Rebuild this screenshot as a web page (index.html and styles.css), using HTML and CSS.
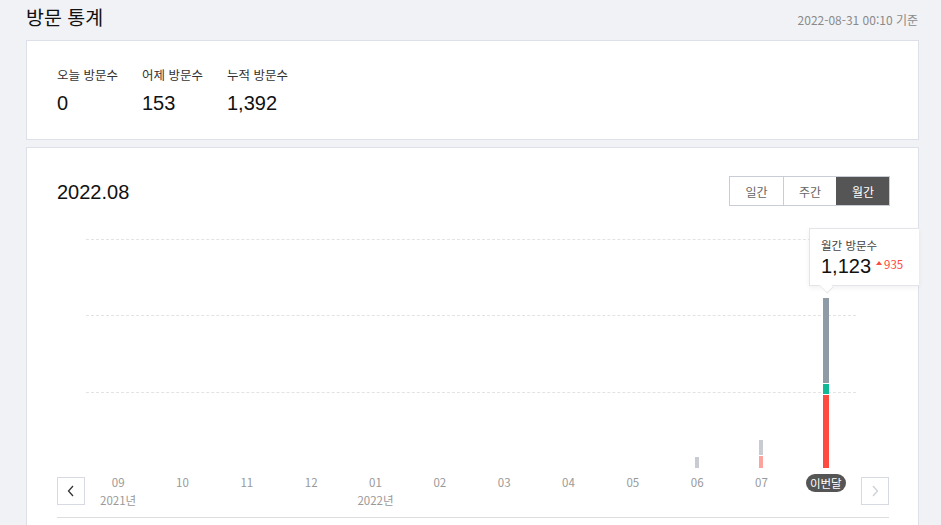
FILE: index.html
```html
<!DOCTYPE html>
<html lang="ko">
<head>
<meta charset="utf-8">
<link rel="stylesheet" href="styles.css">
</head>
<body>
<div class="page">
  <header class="page-head">
    <h1 class="page-title">방문 통계</h1>
    <span class="page-date">2022-08-31 00:10 기준</span>
  </header>

  <section class="card summary">
    <div class="stat">
      <div class="stat-label">오늘 방문수</div>
      <div class="stat-value">0</div>
    </div>
    <div class="stat">
      <div class="stat-label">어제 방문수</div>
      <div class="stat-value">153</div>
    </div>
    <div class="stat">
      <div class="stat-label">누적 방문수</div>
      <div class="stat-value">1,392</div>
    </div>
  </section>

  <section class="card chart-card">
    <div class="chart-head">
      <h2 class="chart-title">2022.08</h2>
      <div class="tabs">
        <button class="tab">일간</button>
        <button class="tab">주간</button>
        <button class="tab active">월간</button>
      </div>
    </div>

    <div class="plot-wrap">
      <div class="plot">
        <div class="band"></div>
        <div class="band"></div>
        <div class="band"></div>
        <div class="bars">
          <div class="col"></div>
          <div class="col"></div>
          <div class="col"></div>
          <div class="col"></div>
          <div class="col"></div>
          <div class="col"></div>
          <div class="col"></div>
          <div class="col"></div>
          <div class="col"></div>
          <div class="col">
            <div class="bar thin">
              <span class="seg pale-gray" style="height:11px"></span>
            </div>
          </div>
          <div class="col">
            <div class="bar thin">
              <span class="seg pale-gray" style="height:15px"></span>
              <span class="seg pale-red" style="height:12px"></span>
            </div>
          </div>
          <div class="col">
            <div class="bar wide">
              <span class="seg gray" style="height:85px"></span>
              <span class="seg green" style="height:10px"></span>
              <span class="seg red" style="height:73px"></span>
            </div>
          </div>
        </div>
      </div>
      <div class="tooltip">
        <div class="tip-label">월간 방문수</div>
        <div class="tip-row">
          <span class="tip-value">1,123</span>
          <span class="tip-diff"><span class="up"></span>935</span>
        </div>
      </div>
    </div>

    <div class="axis">
      <button class="nav prev" aria-label="이전">
        <svg width="10" height="12" viewBox="0 0 10 12"><path d="M7 1 L2.5 6 L7 11" fill="none" stroke="#333" stroke-width="1.3"/></svg>
      </button>
      <div class="ticks">
        <div class="tick"><span class="m">09</span><span class="y">2021년</span></div>
        <div class="tick"><span class="m">10</span></div>
        <div class="tick"><span class="m">11</span></div>
        <div class="tick"><span class="m">12</span></div>
        <div class="tick"><span class="m">01</span><span class="y">2022년</span></div>
        <div class="tick"><span class="m">02</span></div>
        <div class="tick"><span class="m">03</span></div>
        <div class="tick"><span class="m">04</span></div>
        <div class="tick"><span class="m">05</span></div>
        <div class="tick"><span class="m">06</span></div>
        <div class="tick"><span class="m">07</span></div>
        <div class="tick"><span class="m current">이번달</span></div>
      </div>
      <button class="nav next" aria-label="다음">
        <svg width="10" height="12" viewBox="0 0 10 12"><path d="M3 1 L7.5 6 L3 11" fill="none" stroke="#ccd0d8" stroke-width="1.3"/></svg>
      </button>
    </div>
  </section>
</div>
</body>
</html>
```

FILE: styles.css
```css
* { box-sizing: border-box; }

html, body {
  margin: 0;
  padding: 0;
  background: #f1f2f6;
  font-family: "Noto Sans CJK KR", "Noto Sans", sans-serif;
  color: #222;
}

.page {
  padding: 0 22px 0 26px;
  height: 525px;
  overflow: hidden;
}

.page-head {
  display: flex;
  justify-content: space-between;
  align-items: center;
  height: 36px;
  margin-bottom: 4px;
}

.page-title {
  margin: 0;
  font-size: 19.5px;
  font-weight: 400;
  color: #111;
  line-height: 28px;
  margin-top: -2px;
}

.page-date {
  font-size: 12px;
  color: #8a8a8a;
  margin-right: 1px;
  margin-top: 2px;
}

.card {
  background: #fff;
  border: 1px solid #dde0e8;
}

.summary {
  display: flex;
  padding: 25px 30px 22px;
}

.stat {
  width: 85px;
}

.stat-label {
  font-size: 12.5px;
  line-height: 18px;
  color: #333;
}

.stat-value {
  margin-top: 5px;
  font-family: "Liberation Sans", Arial, sans-serif;
  font-size: 20px;
  line-height: 28px;
  color: #111;
}

.chart-card {
  margin-top: 7px;
  padding: 28px 29px 0 30px;
  position: relative;
  height: 400px;
}

.chart-head {
  display: flex;
  justify-content: space-between;
  align-items: center;
  height: 30px;
  margin-right: -1px;
}

.chart-title {
  margin: 0;
  font-family: "Liberation Sans", Arial, sans-serif;
  font-size: 20px;
  font-weight: 400;
  color: #111;
  line-height: 30px;
  margin-top: 2px;
}

.tabs {
  display: flex;
  border: 1px solid #c9cdd6;
}

.tab {
  width: 53px;
  height: 28px;
  border: 0;
  border-left: 1px solid #c9cdd6;
  background: #fff;
  font-family: "Noto Sans CJK KR", sans-serif;
  font-size: 12px;
  color: #666;
  padding: 0;
  cursor: pointer;
}

.tab:first-child { border-left: 0; }

.tab.active {
  background: #555;
  color: #fff;
  border-left-color: #555;
}

.plot-wrap {
  position: relative;
  margin-top: 33px;
  padding-left: 29px;
  padding-right: 31px;
}

.plot {
  position: relative;
  height: 229px;
  display: flex;
  flex-direction: column;
}

.band {
  flex: 1;
  border-top: 1px dashed #e3e3e3;
  margin-right: 2px;
}

.bars {
  position: absolute;
  left: 0;
  right: 0;
  bottom: 0;
  top: 0;
  display: grid;
  grid-template-columns: repeat(12, 1fr);
  align-items: end;
}

.col {
  display: flex;
  justify-content: center;
  align-items: flex-end;
  height: 100%;
}

.bar {
  display: flex;
  flex-direction: column;
  gap: 1px;
}

.bar.thin { width: 4px; }
.bar.wide { width: 6px; }

.seg { display: block; width: 100%; }
.seg.gray { background: #8e9aa5; }
.seg.green { background: #10b995; }
.seg.red { background: #ff4a3f; }
.seg.pale-gray { background: #c8ccd2; }
.seg.pale-red { background: #fca39f; }

.tooltip {
  position: absolute;
  left: 752px;
  top: -11px;
  width: 110px;
  height: 58px;
  background: #fff;
  border: 1px solid #e3e5ea;
  border-right: 0;
  box-shadow: 0 2px 5px rgba(0,0,0,0.06);
  padding: 8px 0 0 11px;
}

.tooltip::after {
  content: "";
  position: absolute;
  left: 11px;
  bottom: -7px;
  width: 10px;
  height: 10px;
  background: #fff;
  border-right: 1px solid #e3e5ea;
  border-bottom: 1px solid #e3e5ea;
  transform: rotate(45deg) scaleY(0.8);
}

.tip-label {
  font-size: 11.5px;
  line-height: 16px;
  color: #444;
}

.tip-row {
  display: flex;
  align-items: center;
  gap: 5px;
  height: 26px;
}

.tip-value {
  font-family: "Liberation Sans", Arial, sans-serif;
  font-size: 20px;
  line-height: 26px;
  color: #111;
}

.tip-diff {
  font-size: 11.5px;
  line-height: 14px;
  color: #ff4a3f;
  display: flex;
  align-items: center;
  gap: 2px;
  margin-bottom: 5px;
}

.up {
  display: block;
  width: 0;
  height: 0;
  border-left: 3px solid transparent;
  border-right: 3px solid transparent;
  border-bottom: 4px solid #ff4a3f;
  margin-top: -2px;
}

.axis {
  display: flex;
  align-items: flex-start;
  margin-top: 5px;
  padding-bottom: 8px;
  border-bottom: 1px solid #dddddd;
  height: 45px;
}

.nav {
  width: 28px;
  height: 28px;
  margin-top: 4px;
  border: 1px solid #d7dae3;
  background: #fff;
  padding: 0;
  display: flex;
  align-items: center;
  justify-content: center;
  flex: none;
}

.ticks {
  margin-left: 1px;
  width: 772px;
  display: grid;
  grid-template-columns: repeat(12, 1fr);
}

.nav.next { margin-left: 3px; }

.tick {
  display: flex;
  flex-direction: column;
  align-items: center;
}

.tick .m {
  font-size: 11.5px;
  line-height: 18px;
  color: #999;
}

.tick .y {
  font-size: 11.5px;
  line-height: 18px;
  color: #999;
}

.tick .m.current {
  margin-top: 1px;
  background: #555;
  color: #fff;
  border-radius: 9px;
  padding: 0 4px;
  line-height: 18px;
}
```
